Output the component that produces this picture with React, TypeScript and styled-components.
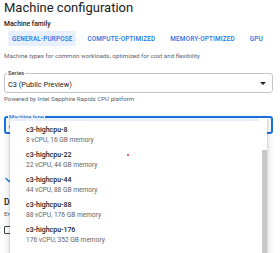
import React from 'react';
import styled, { createGlobalStyle } from 'styled-components';

const families = ['General-purpose', 'Compute-optimized', 'Memory-optimized', 'GPU'];

const machineTypes = [
  { name: 'c3-highcpu-8', spec: '8 vCPU, 16 GB memory' },
  { name: 'c3-highcpu-22', spec: '22 vCPU, 44 GB memory' },
  { name: 'c3-highcpu-44', spec: '44 vCPU, 88 GB memory' },
  { name: 'c3-highcpu-88', spec: '88 vCPU, 176 GB memory' },
  { name: 'c3-highcpu-176', spec: '176 vCPU, 352 GB memory' },
];

const GlobalStyle = createGlobalStyle`
  html, body {
    margin: 0;
    padding: 0;
    background: #fff;
    font-family: Roboto, "Liberation Sans", sans-serif;
    overflow: hidden;
  }
`;

const Page = styled.div`
  position: relative;
  width: 280px;
  height: 253px;
  overflow: hidden;
  padding: 0 7px 0 4px;
  box-sizing: border-box;
`;

const Title = styled.h1`
  margin: 0;
  font-size: 13px;
  line-height: 16px;
  font-weight: 400;
  color: #202124;
`;

const FieldLabel = styled.div`
  margin-top: 3px;
  font-size: 6.8px;
  line-height: 10px;
  font-weight: 500;
  color: #202124;
`;

const TabRow = styled.div`
  display: flex;
  gap: 7px;
  margin: 2px 0 0 4px;
`;

const Tab = styled.div<{ active?: boolean }>`
  height: 15px;
  display: flex;
  align-items: center;
  padding: 0 4px;
  font-size: 6.4px;
  font-weight: 500;
  letter-spacing: 0.15px;
  text-transform: uppercase;
  color: #1a73e8;
  background: ${({ active }) => (active ? '#e8f0fe' : 'transparent')};
  border-radius: 2px;
`;

const Hint = styled.div<{ top?: number }>`
  margin-top: ${({ top }) => top ?? 0}px;
  font-size: 6.2px;
  line-height: 9px;
  color: #5f6368;
`;

const SelectBox = styled.div<{ focused?: boolean }>`
  position: relative;
  box-sizing: border-box;
  height: ${({ focused }) => (focused ? 18 : 20)}px;
  border: ${({ focused }) => (focused ? '2px solid #1a73e8' : '1px solid #c4c7c5')};
  border-radius: 3px;
  display: flex;
  align-items: center;
  padding: 0 6px 0 3px;
`;

const SelectLabel = styled.span<{ focused?: boolean }>`
  position: absolute;
  top: -5px;
  left: 2px;
  padding: 0 1px;
  background: #fff;
  font-size: 5.8px;
  line-height: 8px;
  font-weight: 500;
  color: ${({ focused }) => (focused ? '#1a73e8' : '#3c4043')};
`;

const SelectValue = styled.span`
  flex: 1;
  font-size: 7.4px;
  color: #202124;
  padding-top: 2px;
`;

const Caret = styled.span`
  width: 0;
  height: 0;
  border-left: 3px solid transparent;
  border-right: 3px solid transparent;
  border-top: 3px solid #202124;
`;

const Expander = styled.div`
  display: flex;
  align-items: center;
  gap: 4px;
  margin-top: 40px;
  height: 12px;
  font-size: 7px;
  font-weight: 500;
  color: #1a73e8;
`;

const SectionTitle = styled.div`
  margin-top: 10px;
  font-size: 8.5px;
  line-height: 12px;
  font-weight: 500;
  color: #202124;
`;

const CheckRow = styled.div`
  display: flex;
  align-items: center;
  gap: 6px;
  margin-top: 7px;
  font-size: 7px;
  color: #202124;
`;

const CheckBox = styled.span`
  width: 5px;
  height: 6px;
  border: 1.2px solid #3c4043;
  border-radius: 1px;
`;

const Menu = styled.div`
  position: absolute;
  top: 118px;
  left: 10px;
  width: 257px;
  height: 150px;
  background: #fff;
  box-shadow: 0 2px 6px 2px rgba(60, 64, 67, 0.15), 0 1px 2px rgba(60, 64, 67, 0.3);
  overflow: hidden;
`;

const MenuHighlight = styled.div`
  height: 3px;
  width: 249px;
  background: #e8f0fe;
`;

const MenuItem = styled.div`
  height: 25px;
  box-sizing: border-box;
  padding: 4px 0 0 16px;
`;

const ItemName = styled.div`
  font-size: 7px;
  line-height: 10px;
  font-weight: 500;
  color: #202124;
`;

const ItemSpec = styled.div`
  font-size: 6.6px;
  line-height: 11px;
  color: #5f6368;
`;

const ScrollThumb = styled.div`
  position: absolute;
  right: 0;
  top: 32px;
  width: 5px;
  height: 130px;
  background: #c8c8c8;
`;

const Pointer = styled.div`
  position: absolute;
  left: 127px;
  top: 154px;
  width: 2px;
  height: 2px;
  border-radius: 50%;
  background: #e53935;
`;

const App: React.FC = () => (
  <>
    <GlobalStyle />
    <Page>
      <Title>Machine configuration</Title>
      <FieldLabel>Machine family</FieldLabel>
      <TabRow>
        {families.map((f, i) => (
          <Tab key={f} active={i === 0}>
            {f}
          </Tab>
        ))}
      </TabRow>
      <Hint top={6}>Machine types for common workloads, optimized for cost and flexibility</Hint>
      <div style={{ height: 12 }} />
      <SelectBox>
        <SelectLabel>Series</SelectLabel>
        <SelectValue>C3 (Public Preview)</SelectValue>
        <Caret />
      </SelectBox>
      <Hint top={2}>Powered by Intel Sapphire Rapids CPU platform</Hint>
      <div style={{ height: 12 }} />
      <SelectBox focused>
        <SelectLabel focused>Machine type</SelectLabel>
        <SelectValue>c3-highcpu-8</SelectValue>
        <Caret />
      </SelectBox>
      <Expander>
        <svg width="10" height="10" viewBox="0 0 10 10">
          <path d="M1.5 3 L5 6.5 L8.5 3" fill="none" stroke="#1a73e8" strokeWidth="1.3" />
        </svg>
        CPU platform and GPU
      </Expander>
      <SectionTitle>Display device</SectionTitle>
      <Hint top={2}>Enable to use screen capturing and recording tools</Hint>
      <CheckRow>
        <CheckBox />
        Enable display device
      </CheckRow>
      <Menu>
        <MenuHighlight />
        {machineTypes.map((m) => (
          <MenuItem key={m.name}>
            <ItemName>{m.name}</ItemName>
            <ItemSpec>{m.spec}</ItemSpec>
          </MenuItem>
        ))}
        <ScrollThumb />
      </Menu>
      <Pointer />
    </Page>
  </>
);

export default App;
